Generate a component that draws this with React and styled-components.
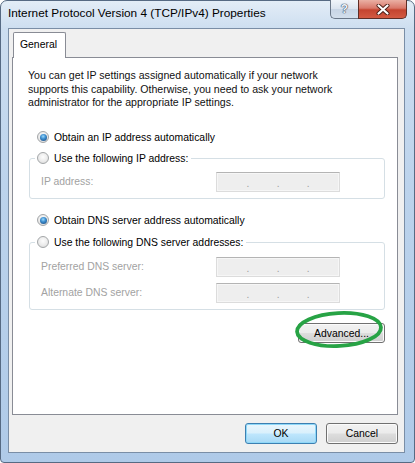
import React from 'react';
import styled, { createGlobalStyle } from 'styled-components';

const GlobalStyle = createGlobalStyle`
  html, body {
    margin: 0;
    padding: 0;
    background: #ffffff;
  }
  body {
    font-family: "Liberation Sans", Arial, sans-serif;
    color: #000;
  }
`;

const Window = styled.div`
  box-sizing: border-box;
  width: 415px;
  height: 463px;
  display: flex;
  flex-direction: column;
  padding: 0 9px 9px 7px;
  border: 1px solid #566a83;
  border-radius: 7px 7px 4px 4px;
  background: linear-gradient(180deg, #e3edf7 0%, #cddef0 6%, #bcd3ec 40%, #afcae8 100%);
`;

const TitleBar = styled.div`
  flex: none;
  height: 27px;
  display: flex;
  justify-content: space-between;
  align-items: flex-start;
`;

const Title = styled.div`
  padding-top: 5px;
  font-size: 11.8px;
  line-height: 14px;
  color: #000;
  white-space: nowrap;
`;

const CaptionButtons = styled.div`
  display: flex;
  margin-top: -1px;
  margin-right: -2px;
`;

const HelpButton = styled.div`
  box-sizing: border-box;
  width: 28px;
  height: 19px;
  display: flex;
  align-items: center;
  justify-content: center;
  border: 1px solid #6a7788;
  border-top: none;
  border-right: none;
  border-radius: 0 0 0 5px;
  background: linear-gradient(180deg, #f1f5fa 0%, #dbe4ef 48%, #c8d5e5 52%, #d3dfec 100%);
  font-size: 12px;
  font-weight: bold;
  color: #eef2f7;
  text-shadow: 0 0 1px #3d4d63, 0 0 1px #3d4d63, 0 0 1px #3d4d63;
`;

const CloseButton = styled.div`
  box-sizing: border-box;
  width: 49px;
  height: 19px;
  display: flex;
  align-items: center;
  justify-content: center;
  border: 1px solid #5e2d25;
  border-top: none;
  border-radius: 0 0 5px 0;
  background: linear-gradient(180deg, #eab0a4 0%, #d9786a 45%, #c4442f 55%, #d35a42 100%);
`;

const Client = styled.div`
  flex: 1;
  display: flex;
  flex-direction: column;
  background: #f0f0f0;
  border: 1px solid #7a8ea6;
  padding: 3px 6px 8px 3px;
`;

const TabStrip = styled.div`
  display: flex;
  padding-left: 1px;
  margin-bottom: -1px;
  position: relative;
  z-index: 1;
`;

const Tab = styled.div`
  box-sizing: border-box;
  height: 26px;
  padding: 0 8px 0 6px;
  border: 1px solid #898c95;
  border-bottom: none;
  border-radius: 2px 2px 0 0;
  background: #ffffff;
  font-size: 10.4px;
  line-height: 24px;
`;

const Panel = styled.div`
  flex: 1;
  display: flex;
  flex-direction: column;
  background: #ffffff;
  border: 1px solid #898c95;
  padding: 11px 12px 0 15px;
`;

const Intro = styled.p`
  margin: 0;
  font-size: 10.6px;
  line-height: 13.5px;
  color: #111;
`;

const OptionRow = styled.label`
  display: flex;
  align-items: center;
  gap: 5px;
  height: 13px;
  margin: ${p => p.$top}px 0 0 9px;
  font-size: 10.4px;
  line-height: 13px;
  white-space: nowrap;
`;

const Radio = styled.span`
  box-sizing: border-box;
  flex: none;
  width: 12px;
  height: 12px;
  border-radius: 50%;
  border: 1px solid #a3a6a8;
  background: radial-gradient(circle at 50% 40%, #fdfdfd 0%, #ebebeb 55%, #d4d4d4 100%);
  display: inline-flex;
  align-items: center;
  justify-content: center;

  &::after {
    content: '';
    display: ${p => (p.$checked ? 'block' : 'none')};
    width: 7px;
    height: 7px;
    border-radius: 50%;
    background: radial-gradient(circle at 45% 35%, #9ad8fb 0%, #3d8fd0 40%, #173f72 100%);
  }
`;

const Group = styled.fieldset`
  margin: ${p => p.$top}px 0 0 1px;
  padding: 7px 0 6px;
  border: 1px solid #d5dfe5;
  border-radius: 3px;
  min-width: 0;
`;

const GroupLegend = styled.legend`
  margin-left: 5px;
  padding: 0 3px 0 2px;
  display: flex;
  align-items: center;
  gap: 5px;
  height: 13px;
  font-size: 10.4px;
  line-height: 13px;
  white-space: nowrap;
`;

const Rows = styled.div`
  display: flex;
  flex-direction: column;
  gap: 6px;
  padding-top: ${p => p.$pad || 0}px;
`;

const FieldRow = styled.div`
  display: grid;
  grid-template-columns: 175px 124px;
  align-items: center;
  height: 20px;
  padding-left: 11px;
`;

const FieldLabel = styled.span`
  font-size: 10.4px;
  color: #a2a2a2;
`;

const AddressBox = styled.div`
  box-sizing: border-box;
  height: 20px;
  display: flex;
  align-items: flex-end;
  padding: 0 2px 3px;
  border: 1px solid #dcdcdc;
  border-top-color: #b4b4b4;
  background: #eeeeee;
  box-shadow: inset 0 0 0 1px #f6f6f6;
`;

const Segment = styled.span`
  flex: 1;
`;

const Dot = styled.span`
  font-size: 10px;
  line-height: 8px;
  color: #9c9c9c;
`;

const AdvancedRow = styled.div`
  display: flex;
  justify-content: flex-end;
  margin-top: 13px;
`;

const Annotated = styled.div`
  position: relative;
`;

const Ring = styled.svg`
  position: absolute;
  left: -4px;
  top: -12px;
  width: 92px;
  height: 38px;
  overflow: visible;
  pointer-events: none;
`;

const Button = styled.button`
  box-sizing: border-box;
  width: ${p => p.$w}px;
  height: ${p => p.$h}px;
  padding: 0;
  font-family: "Liberation Sans", Arial, sans-serif;
  font-size: 10.4px;
  color: #000;
  border-radius: 3px;
  border: 1px solid ${p => (p.$primary ? '#3c7fb1' : '#707070')};
  background: ${p =>
    p.$primary
      ? 'linear-gradient(180deg, #eaf6fd 0%, #d9f0fc 48%, #bee6fd 52%, #a7d9f5 100%)'
      : 'linear-gradient(180deg, #f2f2f2 0%, #ebebeb 48%, #dddddd 52%, #cfcfcf 100%)'};
  box-shadow: inset 0 0 0 1px ${p => (p.$primary ? '#8fd8f8' : '#fbfbfb')};
`;

const Footer = styled.div`
  display: flex;
  justify-content: flex-end;
  gap: 9px;
  margin-top: 8px;
`;

function Address() {
  return (
    <AddressBox>
      <Segment />
      <Dot>.</Dot>
      <Segment />
      <Dot>.</Dot>
      <Segment />
      <Dot>.</Dot>
      <Segment />
    </AddressBox>
  );
}

export default function App() {
  return (
    <>
      <GlobalStyle />
      <Window>
        <TitleBar>
          <Title>Internet Protocol Version 4 (TCP/IPv4) Properties</Title>
          <CaptionButtons>
            <HelpButton>?</HelpButton>
            <CloseButton>
              <svg width="14" height="11" viewBox="0 0 14 11">
                <path d="M2.5 1.5 L11.5 9.5 M11.5 1.5 L2.5 9.5" stroke="#4a1d15" strokeWidth="4" strokeLinecap="round" />
                <path d="M2.5 1.5 L11.5 9.5 M11.5 1.5 L2.5 9.5" stroke="#ffffff" strokeWidth="2.2" strokeLinecap="round" />
              </svg>
            </CloseButton>
          </CaptionButtons>
        </TitleBar>

        <Client>
          <TabStrip>
            <Tab>General</Tab>
          </TabStrip>
          <Panel>
            <Intro>
              You can get IP settings assigned automatically if your network<br />
              supports this capability. Otherwise, you need to ask your network<br />
              administrator for the appropriate IP settings.
            </Intro>

            <OptionRow $top={21}>
              <Radio $checked />
              Obtain an IP address automatically
            </OptionRow>
            <Group $top={8}>
              <GroupLegend>
                <Radio />
                Use the following IP address:
              </GroupLegend>
              <Rows>
                <FieldRow>
                  <FieldLabel>IP address:</FieldLabel>
                  <Address />
                </FieldRow>
              </Rows>
            </Group>

            <OptionRow $top={15}>
              <Radio $checked />
              Obtain DNS server address automatically
            </OptionRow>
            <Group $top={9}>
              <GroupLegend>
                <Radio />
                Use the following DNS server addresses:
              </GroupLegend>
              <Rows $pad={1}>
                <FieldRow>
                  <FieldLabel>Preferred DNS server:</FieldLabel>
                  <Address />
                </FieldRow>
                <FieldRow>
                  <FieldLabel>Alternate DNS server:</FieldLabel>
                  <Address />
                </FieldRow>
              </Rows>
            </Group>

            <AdvancedRow>
              <Annotated>
                <Button $w={87} $h={20}>Advanced...</Button>
                <Ring viewBox="0 0 92 38">
                  <ellipse cx="45" cy="18.5" rx="42" ry="16.5" fill="none" stroke="#27a345" strokeWidth="3.8" transform="rotate(-3 45 18.5)" />
                </Ring>
              </Annotated>
            </AdvancedRow>
          </Panel>

          <Footer>
            <Button $primary $w={72} $h={21}>OK</Button>
            <Button $w={72} $h={21}>Cancel</Button>
          </Footer>
        </Client>
      </Window>
    </>
  );
}
